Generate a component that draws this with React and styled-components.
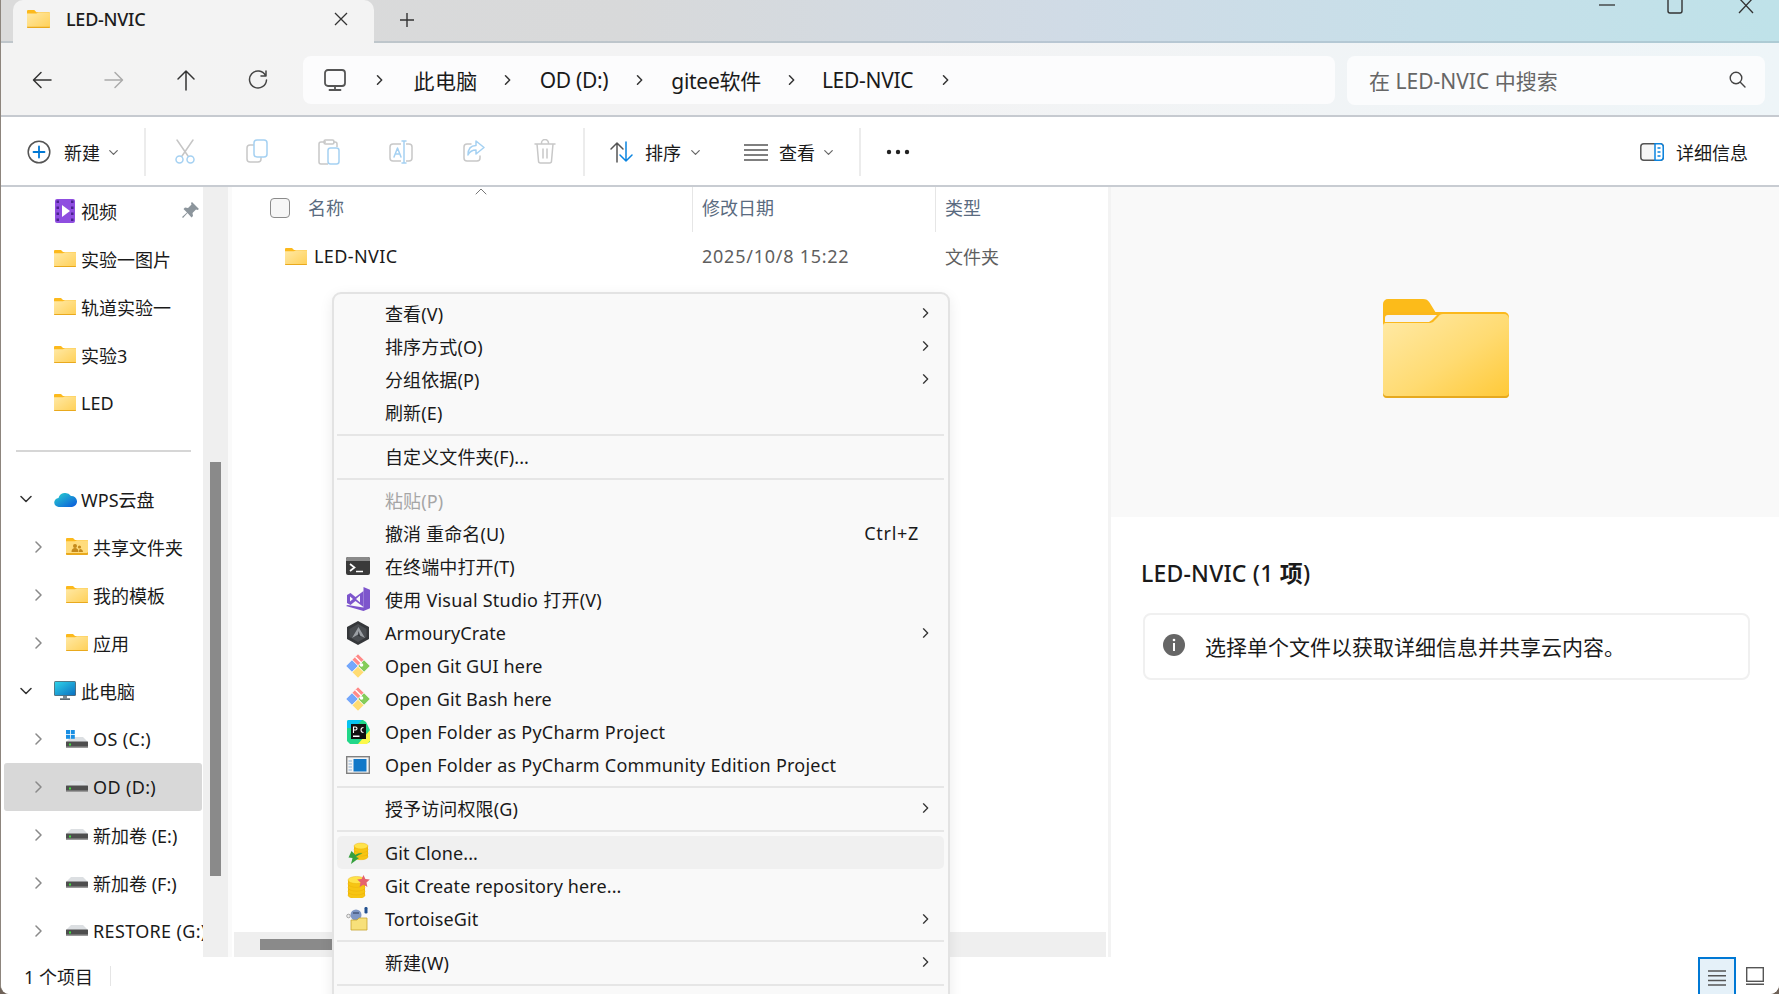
import React from "react";
import styled, { createGlobalStyle } from "styled-components";

const Global = createGlobalStyle`
  html, body { margin: 0; padding: 0; background: #6f6258; }
  body { font-family: "Noto Sans", "Noto Sans CJK SC", sans-serif; color: #1a1a1a; font-size: 18px; }
  * { box-sizing: border-box; }
  svg { display: block; flex: none; }
`;

const Window = styled.div`
  position: relative; width: 1779px; height: 994px; overflow: hidden;
  display: flex; flex-direction: column; background: #fff;
  border-left: 1px solid #8d857d; border-radius: 0 0 9px 9px;
`;
const TitleBar = styled.div`
  height: 43px; flex: none; display: flex; align-items: flex-start; padding-left: 12px;
  background: linear-gradient(90deg, #dbdbdb 0%, #d8d9da 35%, #d0dbe6 60%, #c7dfe9 80%, #bfe2e9 100%);
  border-bottom: 2px solid rgba(140, 160, 175, .35);
`;
const Tab = styled.div`
  height: 43px; width: 361px; background: #f3f3f3;
  border-top-right-radius: 10px; border-top-left-radius: 10px;
  display: flex; align-items: center; padding: 0 26px 5px 14px; flex: none;
`;
const TabTitle = styled.span`margin-left: 16px; font-size: 18px; font-weight: 500; letter-spacing: -.25px; flex: 1; color: #1c1c1c;`;
const NewTab = styled.div`margin: 12px 0 0 25px;`;
const WinControls = styled.div`
  margin-left: auto; height: 14px; display: flex; padding-right: 25px; flex: none; align-items: flex-start;
`;
const WinButton = styled.div`margin-right: ${(p) => p.$after || 0}px;`;
const NavBar = styled.div`
  height: 74px; flex: none; display: flex; align-items: center; padding: 2px 0 0 5px;
  background: linear-gradient(90deg, #f3f3f3 0%, #f3f3f4 50%, #eef5f8 100%);
  border-bottom: 2px solid #c6cad0;
`;
const NavSlot = styled.div`width: 72px; display: flex; justify-content: center; flex: none;`;
const Address = styled.div`
  margin-left: 9px; width: 1032px; height: 48px; background: #fcfcfd; border-radius: 8px;
  display: flex; align-items: center; gap: 26.5px; padding-left: 20px; font-size: 21px; flex: none;
`;
const Crumb = styled.span`
  letter-spacing: ${(p) => p.$sp}px;
  margin: 0 ${(p) => p.$mr || 0}px 0 ${(p) => p.$ml || 0}px;
`;
const CrumbStart = styled.div`margin-left: 1.5px;`;
const Search = styled.div`
  margin-left: 12px; width: 418px; height: 49px; background: #fbfcfd; border-radius: 8px;
  display: flex; align-items: center; justify-content: space-between; padding: 0 18px 1px 22px;
  font-size: 21px; color: #666; flex: none;
`;
const Toolbar = styled.div`
  height: 70px; flex: none; display: flex; align-items: center; padding: 2px 0 0 26px; background: #fff;
  border-bottom: 2px solid #c8ccd2; font-size: 18px;
`;
const ToolGroup = styled.div`
  display: flex; align-items: center; width: ${(p) => p.$w}px; flex: none; gap: ${(p) => p.$gap || 12}px;
  padding-left: ${(p) => p.$pad || 0}px;
`;
const ToolSep = styled.div`width: 2px; height: 48px; background: #ececec; flex: none;`;
const ToolRun = styled.div`display: flex; flex: none; padding: 0 2px 0 3px;`;
const ToolIcon = styled.div`width: 72px; display: flex; justify-content: center; flex: none;`;
const Caret = styled.div`margin-left: ${(p) => p.$m}px;`;
const DetailsBtn = styled.div`margin-left: auto; display: flex; align-items: center; gap: 12px; padding-right: 31px;`;
const Body = styled.div`flex: 1; display: flex; min-height: 0;`;
const Sidebar = styled.div`width: 202px; flex: none; overflow: hidden; font-size: 18px;`;
const NavRow = styled.div`
  height: 48px; display: flex; align-items: center; position: relative; white-space: nowrap;
  padding: 0 0 1px ${(p) => p.$indent}px; margin-left: 3px; border-radius: 3px; width: 198px;
  background: ${(p) => (p.$sel ? "#d8d8d8" : "transparent")};
`;
const NavIconBox = styled.div`width: 24px; display: flex; justify-content: center; flex: none; margin-right: 4px;`;
const NavChevron = styled.div`width: 28px; display: flex; justify-content: center; flex: none; margin-right: ${(p) => p.$after}px;`;
const NavLabel = styled.span`flex: none; letter-spacing: ${(p) => p.$sp || 0}px;`;
const Pin = styled.div`position: absolute; left: 178px; top: 15px;`;
const Divider = styled.div`height: 2px; margin: 23px 12px 23px 15px; background: #d6d6d6;`;
const SideScroll = styled.div`width: 25px; flex: none; background: #efefef; padding: 275px 7px 81px;`;
const ScrollThumb = styled.div`height: 100%; background: #8a8a8a;`;
const Files = styled.div`
  flex: none; width: 880px; display: flex; flex-direction: column; background: #fff;
  border-left: 4px solid #fafafa;
`;
const HeadRow = styled.div`display: flex; height: 45px; flex: none; color: #5a6b80; position: relative;`;
const ColName = styled.div`width: 460px; display: flex; align-items: center; padding: 0 0 6px 38px; gap: 18px; flex: none;`;
const ColOther = styled.div`width: ${(p) => p.$w}px; display: flex; align-items: center; padding: 0 0 6px 9px; border-left: 1px solid #e6e6e6; flex: none;`;
const Check = styled.div`width: 20px; height: 20px; margin-top: 2px; border: 1.5px solid #8b8b8b; border-radius: 4px; background: #f6f6f6;`;
const SortArrow = styled.div`position: absolute; left: 243px; top: -1px;`;
const FileRow = styled.div`display: flex; align-items: center; height: 52px; flex: none; padding-bottom: 4px;`;
const FileName = styled.div`width: 460px; padding-left: 53px; display: flex; align-items: center; gap: 7px; flex: none; letter-spacing: .4px;`;
const FileMeta = styled.div`width: ${(p) => p.$w}px; padding-left: 10px; color: #5f5f5f; flex: none; letter-spacing: ${(p) => p.$sp || 0}px;`;
const Spacer = styled.div`flex: 1;`;
const HScroll = styled.div`height: 25px; flex: none; margin: 0 2px 0 2px; background: #efefef; padding: 7px 0 7px 26px;`;
const HThumb = styled.div`height: 11px; width: 240px; background: #8a8a8a;`;
const Details = styled.div`flex: 1; border-left: 3px solid #f3f3f3; display: flex; flex-direction: column;`;
const Preview = styled.div`height: 330px; flex: none; background: #f9f9f9; display: flex; align-items: center; justify-content: center; padding: 0 0 8px 2px;`;
const DetailHead = styled.div`margin: 41px 0 0 30px; font-size: 23px; font-weight: 500; letter-spacing: .2px; line-height: 30px;`;
const HeadBold = styled.b`font-weight: 700;`;
const InfoCard = styled.div`
  margin: 25px 0 0 32px; width: 607px; height: 67px; border: 2px solid #f0f0f0; border-radius: 8px;
  display: flex; align-items: center; gap: 20px; padding: 0 0 1px 18px; font-size: 21px;
`;
const InfoIcon = styled.div`margin-bottom: 2px;`;
const StatusBar = styled.div`height: 37px; flex: none; display: flex; align-items: center; padding-left: 23px; position: relative; background: #fff;`;
const StatusSep = styled.div`width: 1px; height: 20px; background: #e5e5e5; margin-left: 17px;`;
const ViewBtns = styled.div`margin-left: auto; display: flex; align-items: flex-start; height: 100%; padding-right: 15px;`;
const ViewActive = styled.div`
  width: 38px; height: 37px; border: 2px solid #0078d4; border-bottom: 0; background: #e5f1f9;
  display: flex; justify-content: center; padding-top: 11px;
`;
const ViewPlain = styled.div`margin: 10px 0 0 10px;`;

const Menu = styled.div`
  position: absolute; left: 331px; top: 292px; width: 618px; height: 720px;
  background: #f9f9f9; border: 2px solid #e3e3e3; border-radius: 9px; padding: 3px 4px 3px 3px;
  box-shadow: 0 4px 14px rgba(0,0,0,.08); font-size: 18px; letter-spacing: .12px;
`;
const MenuItem = styled.div`
  height: 33px; display: flex; align-items: center; border-radius: 5px; white-space: nowrap;
  padding: 0 13px ${(p) => (p.$latin ? 0 : 1)}px 0;
  background: ${(p) => (p.$hover ? "#f0f0f0" : "transparent")};
  color: ${(p) => (p.$disabled ? "#a6a6a6" : "#1a1a1a")};
`;
const MenuIcon = styled.div`width: 24px; margin: 0 15px 0 9px; flex: none; display: flex; justify-content: center;`;
const MenuText = styled.span`letter-spacing: ${(p) => (p.$wide ? ".24px" : "inherit")};`;
const MenuRight = styled.div`margin-left: auto;`;
const Hint = styled.span`margin-left: auto; margin-right: 12px; letter-spacing: .7px;`;
const MenuSep = styled.div`height: 2px; background: #e6e6e6; margin: 4.5px 0;`;

const S = ({ w, h = w, vb, children }) => (
  <svg width={w} height={h} viewBox={vb || `0 0 ${w} ${h}`} fill="none">{children}</svg>
);
const Chev = ({ dir = "right", c = "#333", s = 10, sw = 1.5 }) => {
  const d = { right: "M3 1l5 5-5 5", down: "M1 3.5l5 5 5-5", up: "M1 8l5-5 5 5" }[dir];
  return <S w={s} h={s} vb="0 0 12 12"><path d={d} stroke={c} strokeWidth={sw * 12 / s} strokeLinecap="round" strokeLinejoin="round" /></S>;
};
const Folder = ({ w = 22, h = 17, id = "f" }) => (
  <S w={w} h={h} vb="0 0 22 17">
    <defs><linearGradient id={id} x1="0" y1="0" x2="1" y2="1"><stop offset="0" stopColor="#ffe9a6" /><stop offset="1" stopColor="#ffd057" /></linearGradient></defs>
    <path d="M0 1a1 1 0 011-1h6l2 2h12a1 1 0 011 1v5H0z" fill="#fcb91c" />
    <path d="M0 3.200h9l2-1h10a1 1 0 011 1V16a1 1 0 01-1 1H1a1 1 0 01-1-1z" fill={`url(#${id})`} />
    <path d="M0 16h22v.2a.8.8 0 01-.8.8H.8a.8.8 0 01-.8-.8z" fill="#e9a91d" />
  </S>
);
const BigFolder = () => (
  <S w={126} h={99}>
    <defs><linearGradient id="bf" x1="0" y1="0" x2="1" y2="1"><stop offset="0" stopColor="#ffeaa8" /><stop offset=".55" stopColor="#ffdb72" /><stop offset="1" stopColor="#ffc937" /></linearGradient></defs>
    <path d="M0 5a5 5 0 015-5h35c3 0 5 1 6.500 3.500L53 14H0z" fill="#fcbb1a" />
    <path d="M0 30V13h121a5 5 0 015 5v12z" fill="#fbb81c" />
    <path d="M2 19a3 3 0 013-3h49l-5 5-3 2H2z" fill="#f4f4f4" />
    <path d="M0 27a3 3 0 013-3h42c3 0 5-.5 6-2l4-4c1-2 3-3 5-3h61a5 5 0 015 5v75a4 4 0 01-4 4H4a4 4 0 01-4-4z" fill="url(#bf)" />
    <path d="M0 94v1a4 4 0 004 4h118a4 4 0 004-4v-1a4 4 0 01-4 3H4a4 4 0 01-4-3z" fill="#e6a91f" />
  </S>
);
const Video = () => (
  <S w={20} h={24}>
    <rect width="20" height="24" rx="2" fill="#8f4ee0" />
    <path d="M7 6l8 6-8 6z" fill="#fff" />
    {[3, 9, 15, 21].map((y) => <g key={y}><rect x="1.500" y={y - 1.500} width="2.500" height="2.500" fill="#4b2390" /><rect x="16" y={y - 1.500} width="2.500" height="2.500" fill="#4b2390" /></g>)}
  </S>
);
const Cloud = () => (
  <S w={23} h={18}>
    <defs><linearGradient id="cl" x1="0" y1="0" x2="1" y2="1"><stop offset="0" stopColor="#29d3cf" /><stop offset="1" stopColor="#0a56db" /></linearGradient></defs>
    <path d="M5 17a4.500 4.500 0 01-.5-9A7 7 0 0117 6a5.500 5.500 0 011 11z" fill="url(#cl)" />
  </S>
);
const SharedFolder = () => (
  <S w={22} h={17}>
    <path d="M0 1a1 1 0 011-1h6l2 2h12a1 1 0 011 1v5H0z" fill="#fcb91c" />
    <path d="M0 3.200h9l2-1h10a1 1 0 011 1V16a1 1 0 01-1 1H1a1 1 0 01-1-1z" fill="#ffdc7c" />
    <path d="M0 15h21l1-1v2a1 1 0 01-1 1H1a1 1 0 01-1-1z" fill="#e9a91d" />
    <circle cx="9" cy="8" r="2" fill="#c58a1c" /><circle cx="13.500" cy="9" r="1.600" fill="#c58a1c" />
    <path d="M5.500 14c0-3 1.500-4 3.500-4s3.500 1 3.500 4zM13 14c0-2 .5-3 1-3 1.500 0 3 1 3 3z" fill="#c58a1c" />
  </S>
);
const PC = () => (
  <S w={22} h={19}>
    <defs><linearGradient id="pc" x1="0" y1="0" x2="1" y2="1"><stop offset="0" stopColor="#2ed3ea" /><stop offset="1" stopColor="#0b6fc0" /></linearGradient></defs>
    <rect width="22" height="15" rx="1.500" fill="#5b6a73" /><rect x=".8" y=".8" width="20.400" height="13.400" fill="url(#pc)" />
    <rect x="9" y="15" width="4" height="2.500" fill="#7a8a93" /><rect x="6" y="17.300" width="10" height="1.700" fill="#5b6a73" />
  </S>
);
const Drive = ({ win }) => (
  <S w={22} h={win ? 18 : 11} vb={win ? "0 0 22 18" : "0 0 22 11"}>
    <g transform={win ? "translate(0 7)" : undefined}>
      <path d="M5 0h12l5 5H0z" fill="#dcdfe2" />
      <rect y="4.500" width="22" height="6.500" fill="#4e4e4e" rx=".5" />
      <rect y="9.500" width="22" height="1.500" fill="#9a9a9a" />
      <rect x="3" y="6.500" width="2" height="2" fill="#3fdc3f" />
    </g>
    {win && <g fill="#1a8fe3"><rect width="4" height="4" /><rect x="4.800" width="4" height="4" /><rect y="4.800" width="4" height="4" /><rect x="4.800" y="4.800" width="4" height="4" /></g>}
  </S>
);
const PinIcon = () => (
  <S w={17} h={17}><path d="M10 0l7 7-1.500 1-1.500-.5-3.500 3.500.5 3-1.500 1.500L5.500 11 1 16l-1-1 5-4.500L1.500 7 3 5.500l3 .5L9.500 2.500 9 1z" fill="#8c959c" /></S>
);
const Coins = ({ x, y, rx, rows, step }) => (
  <g>
    <rect x={x - rx} y={y} width={rx * 2} height={rows * step} fill="#f2b90e" />
    {Array.from({ length: rows + 1 }).map((_, i) => (
      <ellipse key={i} cx={x} cy={y + (rows - i) * step} rx={rx} ry={rx * .42} fill={i === rows ? "#ffe34a" : "#f7c514"} stroke="#e8ab08" strokeWidth=".4" />
    ))}
  </g>
);
const Ico = {
  back: <S w={24}><path d="M21 12H4M11 4.500L3.500 12l7.500 7.500" stroke="#333" strokeWidth="1.500" strokeLinecap="round" strokeLinejoin="round" /></S>,
  fwd: <S w={24}><path d="M3 12h17M13 4.500l7.500 7.500-7.500 7.500" stroke="#ababab" strokeWidth="1.500" strokeLinecap="round" strokeLinejoin="round" /></S>,
  up: <S w={24}><path d="M12 22V3M4 11l8-8 8 8" stroke="#333" strokeWidth="1.500" strokeLinecap="round" strokeLinejoin="round" /></S>,
  refresh: <S w={24}><path d="M19.500 7.500A8.500 8.500 0 1020.500 12M20 3v5h-5" stroke="#444" strokeWidth="1.500" strokeLinecap="round" strokeLinejoin="round" /></S>,
  monitor: <S w={24} h={24}><rect x="2" y="2" width="20" height="16" rx="3" stroke="#555" strokeWidth="1.800" /><path d="M12 18v3M6.500 22h11" stroke="#555" strokeWidth="1.800" strokeLinecap="round" /></S>,
  search: <S w={19}><circle cx="8" cy="8" r="5.800" stroke="#444" strokeWidth="1.400" /><path d="M12.300 12.300L17 17" stroke="#444" strokeWidth="1.400" strokeLinecap="round" /></S>,
  plus: <S w={24}><circle cx="12" cy="12" r="10.800" stroke="#555" strokeWidth="1.500" /><path d="M12 6.500v11M6.500 12h11" stroke="#0078d4" strokeWidth="1.800" strokeLinecap="round" /></S>,
  cut: <S w={22} h={25}><path d="M3 1l11 16M19 1L8 17" stroke="#c6c6c6" strokeWidth="1.500" strokeLinecap="round" /><circle cx="5.500" cy="20.500" r="3.500" stroke="#a5d1f2" strokeWidth="1.500" /><circle cx="16.500" cy="20.500" r="3.500" stroke="#a5d1f2" strokeWidth="1.500" /></S>,
  copy: <S w={22} h={24}><rect x="1" y="6" width="14" height="17" rx="3" stroke="#c8c8c8" strokeWidth="1.500" /><rect x="8" y="1" width="13" height="17" rx="3" fill="#fff" stroke="#a5d1f2" strokeWidth="1.500" /></S>,
  paste: <S w={22} h={26}><path d="M8 3H3a2 2 0 00-2 2v18a2 2 0 002 2h7M15 3h2a2 2 0 012 2v3" stroke="#c8c8c8" strokeWidth="1.500" /><rect x="6" y="1" width="10" height="4" rx="1.500" stroke="#c8c8c8" strokeWidth="1.500" /><rect x="10" y="9" width="11" height="16" rx="2.500" stroke="#a5d1f2" strokeWidth="1.500" fill="#fff" /></S>,
  rename: <S w={24} h={26}><rect x="1" y="5" width="22" height="17" rx="3" stroke="#c8c8c8" strokeWidth="1.500" /><rect x="12" y="3" width="5" height="21" fill="#fff" /><path d="M5 18l3.500-9 3.500 9M6.200 15h4.600M13 2h4M15 2v22M13 24h4" stroke="#a5d1f2" strokeWidth="1.500" strokeLinecap="round" strokeLinejoin="round" /></S>,
  share: <S w={23} h={24}><path d="M9 5H5a3 3 0 00-3 3v11a3 3 0 003 3h10a3 3 0 003-3v-2" stroke="#c8c8c8" strokeWidth="1.500" strokeLinecap="round" /><path d="M14 2l8 6.500-8 6.500v-4c-4 0-6 1-8 5 0-6 3-9.500 8-9.500z" fill="#fff" stroke="#a5d1f2" strokeWidth="1.500" strokeLinejoin="round" /></S>,
  trash: <S w={22} h={25}><path d="M1 5h20M7.500 4a3.500 3.500 0 017 0M3 5l1.500 17a2 2 0 002 2h9a2 2 0 002-2L19 5M9 10v9M13 10v9" stroke="#c8c8c8" strokeWidth="1.500" strokeLinecap="round" /></S>,
  sort: <S w={24}><path d="M8 22V3M2 9l6-6 6 6" stroke="#555" strokeWidth="1.500" strokeLinecap="round" strokeLinejoin="round" /><path d="M17 2v19M11 15l6 6 6-6" stroke="#0a84e0" strokeWidth="1.500" strokeLinecap="round" strokeLinejoin="round" /></S>,
  lines: <S w={24} h={18}><path d="M0 2h24M0 7h24M0 12h24M0 17h24" stroke="#555" strokeWidth="1.500" /></S>,
  more: <S w={24} h={6}><circle cx="3" cy="3" r="2.200" fill="#222" /><circle cx="12" cy="3" r="2.200" fill="#222" /><circle cx="21" cy="3" r="2.200" fill="#222" /></S>,
  details: <S w={24} h={18}><rect x=".8" y=".8" width="22.400" height="16.400" rx="3" fill="#f7f7f7" stroke="#555" strokeWidth="1.500" /><path d="M15 .8h5.200a3 3 0 013 3v10.400a3 3 0 01-3 3H15z" fill="#fff" stroke="#0a84e0" strokeWidth="1.500" /><path d="M17.500 5h3M17.500 9h3M17.500 13h3" stroke="#0a84e0" strokeWidth="1.500" /></S>,
  info: <S w={22}><circle cx="11" cy="11" r="11" fill="#666" /><circle cx="11" cy="6" r="1.300" fill="#fff" /><rect x="10" y="9" width="2" height="8" fill="#fff" /></S>,
  listLines: <S w={18} h={16}><path d="M0 1h18M0 5.700h18M0 10.400h18M0 15h18" stroke="#555" strokeWidth="1.500" /></S>,
  tile: <S w={18} h={18}><rect x=".7" y=".7" width="16.600" height="13.600" stroke="#555" strokeWidth="1.400" /><path d="M0 17.300h18" stroke="#555" strokeWidth="1.400" /></S>,
  terminal: <S w={24} h={18}><rect width="24" height="18" rx="2" fill="#3a3a3a" /><path d="M2 0h20a2 2 0 012 2v2H0V2a2 2 0 012-2z" fill="#8a8a8a" /><path d="M4 7l4.500 3.500L4 14" stroke="#fff" strokeWidth="1.700" /><path d="M10 14.500h7" stroke="#fff" strokeWidth="1.500" /></S>,
  vs: <S w={24}><path d="M17.500 0L24 2.700v18.600L17.500 24 0 19l1.500-1 16 2.500V4z" fill="#7d55cc" /><path d="M17.500 4v16L9.500 14 4.500 18 1 16v-8l3.500-2 5 4zM4 9.500v5l3-2.500zM14 8.500l-4 3.500 4 3.500z" fill="#7d55cc" fillRule="evenodd" /></S>,
  armoury: <S w={22} h={24}><path d="M11 0l11 6v12l-11 6-11-6V6z" fill="#35373a" /><path d="M11 3l8.500 5v8L11 21l-8.500-5V8z" fill="#4a4d51" /><path d="M11.500 6L18 17l-7-3.500L5 17z" fill="#9b9fa4" /><path d="M11.500 10l2 6-2.500-1.300z" fill="#33363a" /></S>,
  git: <S w={24}><g stroke="#fbfbfb" strokeWidth=".5"><path d="M12 0l5.800 5.800-5.800 5.800-5.800-5.800z" fill="#ff8a88" /><path d="M6 6l6 6-6 6-6-6z" fill="#74a7fb" /><path d="M18 6l6 6-6 6-6-6z" fill="#85cc5a" /><path d="M12 12.400l5.800 5.800L12 24l-5.800-5.800z" fill="#ffdc74" /></g><path d="M9.500 3l6 6" stroke="#fff" strokeWidth="1.500" /><circle cx="15.500" cy="11" r="1.800" fill="#fff" /></S>,
  pycharm: <S w={23} h={24}><path d="M0 2a2 2 0 012-2h14l3 2 4 8v12l-5 2H3l-3-3z" fill="#21d789" /><path d="M0 2a2 2 0 012-2h13L7 8H0z" fill="#07c3f2" /><path d="M23 10v11l-3 3h-9z" fill="#fcf84a" /><rect x="4" y="4" width="15" height="15" fill="#111" /><rect x="6" y="15.500" width="6.500" height="1.500" fill="#fff" /><path d="M6.500 13V7h2a1.500 1.500 0 010 3h-2M16.500 7.500a2.200 2.200 0 100 5" stroke="#fff" strokeWidth="1.100" /></S>,
  community: <S w={24} h={18}><rect x=".7" y=".7" width="22.600" height="16.600" fill="#f4f4f4" stroke="#808080" strokeWidth="1.400" /><rect x="7.500" y="3" width="13" height="12.500" fill="#1278c8" /><path d="M2.500 5h3.500M2.500 8h3.500M2.500 11h3.500M2.500 14h3.500" stroke="#8fb2d6" /></S>,
  clone: <S w={24}><Coins x={15} y={5} rx={7} rows={3} step={3.600} /><path d="M5 23l1.500-6-4-.5 3-6.500 4 4c1.500-1.500 4-2 7-1.500-2.500 1-5 2-6.500 3.500l3 1z" fill="#36a03e" /></S>,
  create: <S w={24}><Coins x={10.500} y={6} rx={8.500} rows={4} step={3.800} /><path d="M17.500 1l1.900 4 4.400.5-3.300 3 .9 4.400-3.900-2.200-3.900 2.200.9-4.400-3.300-3 4.400-.5z" fill="#e5626d" /></S>,
  tortoise: <S w={24}><circle cx="10" cy="8" r="5.500" fill="#7f97c4" /><path d="M7 6h6" stroke="#2d3a5a" strokeWidth="1" /><circle cx="2.500" cy="9" r="1.800" fill="#eee" stroke="#777" strokeWidth=".6" /><rect x="18.500" y="0" width="3" height="6.500" rx="1.200" fill="#22508f" /><path d="M5 13h6l2-2h8v12H5z" fill="#f7e07a" stroke="#c9a52d" strokeWidth=".8" /></S>,
};

const navItems = [
  { icon: <Video />, label: "视频", pin: true },
  { icon: <Folder id="n1" />, label: "实验一图片" },
  { icon: <Folder id="n2" />, label: "轨道实验一" },
  { icon: <Folder id="n3" />, label: "实验3" },
  { icon: <Folder id="n4" />, label: "LED" },
];
const treeItems = [
  { chev: "down", icon: <Cloud />, label: "WPS云盘", level: 0 },
  { chev: "right", icon: <SharedFolder />, label: "共享文件夹", level: 1 },
  { chev: "right", icon: <Folder id="t1" />, label: "我的模板", level: 1 },
  { chev: "right", icon: <Folder id="t2" />, label: "应用", level: 1 },
  { chev: "down", icon: <PC />, label: "此电脑", level: 0 },
  { chev: "right", icon: <Drive win />, label: "OS (C:)", level: 1, sp: .35 },
  { chev: "right", icon: <Drive />, label: "OD (D:)", level: 1, sel: true, sp: .35 },
  { chev: "right", icon: <Drive />, label: "新加卷 (E:)", level: 1 },
  { chev: "right", icon: <Drive />, label: "新加卷 (F:)", level: 1 },
  { chev: "right", icon: <Drive />, label: "RESTORE (G:)", level: 1, sp: .35 },
];
const menu = [
  { t: "查看(V)", sub: 1 }, { t: "排序方式(O)", sub: 1 }, { t: "分组依据(P)", sub: 1 }, { t: "刷新(E)" }, "-",
  { t: "自定义文件夹(F)..." }, "-",
  { t: "粘贴(P)", disabled: 1 }, { t: "撤消 重命名(U)", hint: "Ctrl+Z" },
  { t: "在终端中打开(T)", i: "terminal" }, { t: "使用 Visual Studio 打开(V)", i: "vs", wide: 1 },
  { t: "ArmouryCrate", i: "armoury", sub: 1, latin: 1 }, { t: "Open Git GUI here", i: "git", latin: 1 }, { t: "Open Git Bash here", i: "git", latin: 1 },
  { t: "Open Folder as PyCharm Project", i: "pycharm", wide: 1, latin: 1 }, { t: "Open Folder as PyCharm Community Edition Project", i: "community", wide: 1, latin: 1 }, "-",
  { t: "授予访问权限(G)", sub: 1 }, "-",
  { t: "Git Clone...", i: "clone", hover: 1, latin: 1 }, { t: "Git Create repository here...", i: "create", latin: 1 }, { t: "TortoiseGit", i: "tortoise", sub: 1, latin: 1 }, "-",
  { t: "新建(W)", sub: 1 }, "-",
];

export default function App() {
  return (
    <>
      <Global />
      <Window>
        <TitleBar>
          <Tab>
            <Folder w={23} h={18} id="tabf" />
            <TabTitle>LED-NVIC</TabTitle>
            <S w={14}><path d="M1 1l12 12M13 1L1 13" stroke="#333" strokeWidth="1.300" /></S>
          </Tab>
          <NewTab><S w={16}><path d="M8 1v14M1 8h14" stroke="#333" strokeWidth="1.400" /></S></NewTab>
          <WinControls>
            <WinButton $after={52}><S w={16} h={10}><path d="M0 5h16" stroke="#333" strokeWidth="1.300" /></S></WinButton>
            <WinButton $after={55}><S w={16} h={14}><path d="M1 0v11a2 2 0 002 2h10a2 2 0 002-2V0" stroke="#333" strokeWidth="1.400" /></S></WinButton>
            <WinButton><S w={16} h={14}><path d="M1-2l14 15M15-2L1 13" stroke="#333" strokeWidth="1.300" /></S></WinButton>
          </WinControls>
        </TitleBar>
        <NavBar>
          <NavSlot>{Ico.back}</NavSlot><NavSlot>{Ico.fwd}</NavSlot><NavSlot>{Ico.up}</NavSlot><NavSlot>{Ico.refresh}</NavSlot>
          <Address>
            {Ico.monitor}
            <CrumbStart><Chev /></CrumbStart>
            <Crumb $sp={.4} $ml={2} $mr={-1}>此电脑</Crumb><Chev /><Crumb $sp={-.3}>OD (D:)</Crumb><Chev /><Crumb $sp={-.3}>gitee软件</Crumb><Chev /><Crumb $sp={-.28} $ml={-2} $mr={1}>LED-NVIC</Crumb><Chev />
          </Address>
          <Search><span>在 LED-NVIC 中搜索</span>{Ico.search}</Search>
        </NavBar>
        <Toolbar>
          <ToolGroup $w={117} $gap={13}>{Ico.plus}<span>新建</span><Caret $m={-4}><Chev dir="down" c="#666" s={9} sw={1.2} /></Caret></ToolGroup>
          <ToolSep />
          <ToolRun>
            <ToolIcon>{Ico.cut}</ToolIcon><ToolIcon>{Ico.copy}</ToolIcon><ToolIcon>{Ico.paste}</ToolIcon>
            <ToolIcon>{Ico.rename}</ToolIcon><ToolIcon>{Ico.share}</ToolIcon><ToolIcon>{Ico.trash}</ToolIcon>
          </ToolRun>
          <ToolSep />
          <ToolGroup $w={134} $pad={24} $gap={12}>{Ico.sort}<span>排序</span><Caret $m={-2}><Chev dir="down" c="#666" s={9} sw={1.2} /></Caret></ToolGroup>
          <ToolGroup $w={140} $pad={25} $gap={11}>{Ico.lines}<span>查看</span><Caret $m={-2}><Chev dir="down" c="#666" s={9} sw={1.2} /></Caret></ToolGroup>
          <ToolSep />
          <ToolGroup $w={80} $pad={25}>{Ico.more}</ToolGroup>
          <DetailsBtn>{Ico.details}<span>详细信息</span></DetailsBtn>
        </Toolbar>
        <Body>
          <Sidebar>
            {navItems.map((n) => (
              <NavRow key={n.label} $indent={49}>
                <NavIconBox>{n.icon}</NavIconBox><NavLabel>{n.label}</NavLabel>
                {n.pin && <Pin><PinIcon /></Pin>}
              </NavRow>
            ))}
            <Divider />
            {treeItems.map((n) => (
              <NavRow key={n.label} $indent={n.level ? 21 : 8} $sel={n.sel}>
                <NavChevron $after={n.level ? 12 : 13}>
                  <Chev dir={n.chev} c={n.chev === "down" ? "#333" : "#8a8a8a"} s={12} sw={1.5} />
                </NavChevron>
                <NavIconBox>{n.icon}</NavIconBox><NavLabel $sp={n.sp}>{n.label}</NavLabel>
              </NavRow>
            ))}
          </Sidebar>
          <SideScroll><ScrollThumb /></SideScroll>
          <Files>
            <HeadRow>
              <ColName><Check /><span>名称</span></ColName>
              <SortArrow><Chev dir="up" c="#777" s={12} sw={1} /></SortArrow>
              <ColOther $w={243}>修改日期</ColOther>
              <ColOther $w={170}>类型</ColOther>
            </HeadRow>
            <FileRow>
              <FileName><Folder id="row" /><span>LED-NVIC</span></FileName>
              <FileMeta $w={243} $sp={.75}>2025/10/8 15:22</FileMeta>
              <FileMeta $w={170}>文件夹</FileMeta>
            </FileRow>
            <Spacer />
            <HScroll><HThumb /></HScroll>
          </Files>
          <Details>
            <Preview><BigFolder /></Preview>
            <DetailHead>LED-NVIC (1 <HeadBold>项</HeadBold>)</DetailHead>
            <InfoCard><InfoIcon>{Ico.info}</InfoIcon><span>选择单个文件以获取详细信息并共享云内容。</span></InfoCard>
          </Details>
        </Body>
        <StatusBar>
          <span>1 个项目</span><StatusSep />
          <ViewBtns><ViewActive>{Ico.listLines}</ViewActive><ViewPlain>{Ico.tile}</ViewPlain></ViewBtns>
        </StatusBar>
        <Menu>
          {menu.map((m, i) => m === "-" ? <MenuSep key={i} /> : (
            <MenuItem key={i} $hover={m.hover} $disabled={m.disabled} $latin={m.latin}>
              <MenuIcon>{m.i && Ico[m.i]}</MenuIcon>
              <MenuText $wide={m.wide}>{m.t}</MenuText>
              {m.hint && <Hint>{m.hint}</Hint>}
              {m.sub && <MenuRight><Chev c="#333" s={10} sw={1.3} /></MenuRight>}
            </MenuItem>
          ))}
        </Menu>
      </Window>
    </>
  );
}
